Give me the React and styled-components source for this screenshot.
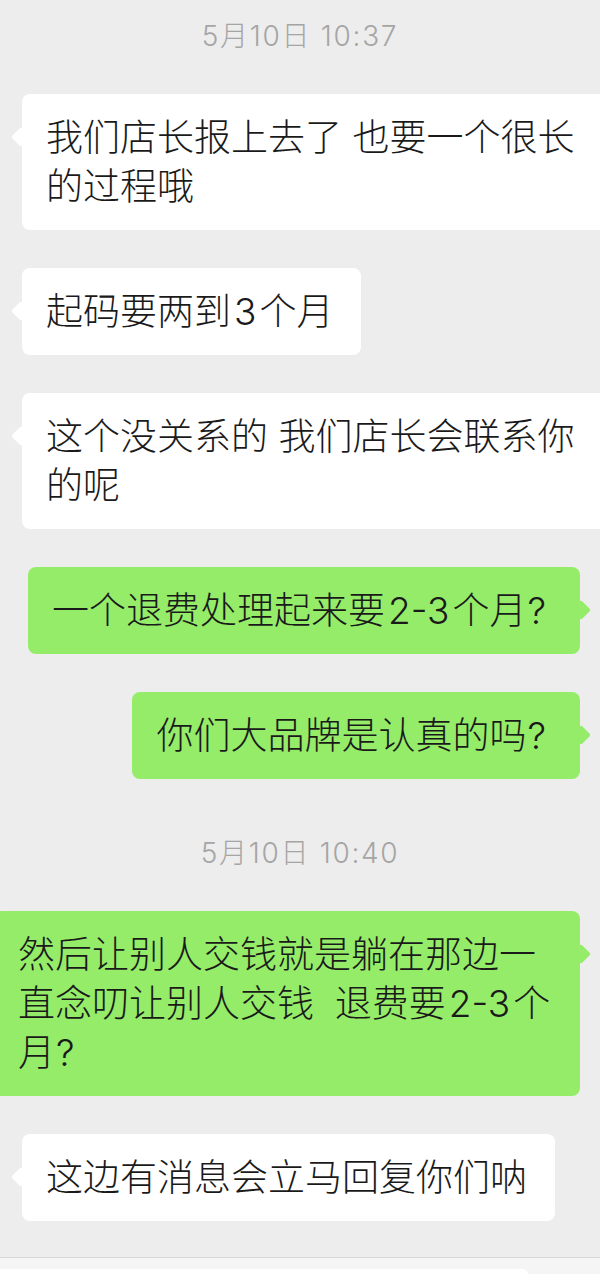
import styled, { createGlobalStyle } from "styled-components";

const GlobalStyle = createGlobalStyle`
    html, body {
        margin: 0;
        padding: 0;
        background: #ededed;
    }
    * {
        box-sizing: border-box;
    }
`

const Screen = styled.div`
    display: flex;
    flex-direction: column;
    width: 600px;
    height: 1274px;
    overflow: hidden;
    background-color: #ededed;
    font-family: "Inter", "Noto Sans CJK SC", sans-serif;
`

const ChatList = styled.div`
    display: flex;
    flex-direction: column;
    flex: 1;
`

const TimeStamp = styled.div`
    height: 36px;
    line-height: 36px;
    margin-top: ${(p) => p.$first ? "18px" : "56px"};
    text-align: center;
    font-size: 28px;
    font-weight: 300;
    color: #a5a5a5;
    letter-spacing: 1.7px;
`

const Row = styled.div`
    display: flex;
    justify-content: ${(p) => p.$mine ? "flex-end" : "flex-start"};
    margin-top: ${(p) => p.$afterTime ? "40px" : "38px"};
    padding-left: ${(p) => p.$mine ? "0" : "22px"};
    padding-right: ${(p) => p.$mine ? "20px" : "0"};
`

const Bubble = styled.div`
    position: relative;
    flex-shrink: 0;
    max-width: 586px;
    padding: 19px 28px 19px 24px;
    border-radius: 8px;
    background-color: ${(p) => p.$mine ? "#95ec69" : "#ffffff"};
    color: #1a1a1a;
    font-size: 37px;
    font-weight: 300;
    line-height: 49px;
    white-space: pre-wrap;
    word-break: break-all;

    &::before {
        content: "";
        position: absolute;
        top: 36px;
        ${(p) => p.$mine ? "right: -8px;" : "left: -8px;"}
        width: 14px;
        height: 14px;
        border-radius: 2px;
        background-color: inherit;
        transform: rotate(45deg);
    }
`

const Num = styled.span`
    margin: 0 3px;
`

const Question = styled.span`
    margin: 0 6px 0 1px;
`

const InputBar = styled.div`
    display: flex;
    height: 17px;
    margin-top: 36px;
    padding-top: 11px;
    border-top: 1px solid #d8d8d8;
    background-color: #f5f5f5;
`

const InputBox = styled.div`
    width: 536px;
    margin-left: -8px;
    height: 20px;
    border-radius: 6px;
    background-color: #ffffff;
`

const messages = [
    { type: "time", text: "5月10日 10:37", first: true },
    { type: "msg", text: "我们店长报上去了 也要一个很长的过程哦" },
    { type: "msg", text: "起码要两到3个月" },
    { type: "msg", text: "这个没关系的 我们店长会联系你的呢" },
    { type: "msg", mine: true, text: "一个退费处理起来要2-3个月?" },
    { type: "msg", mine: true, text: "你们大品牌是认真的吗?" },
    { type: "time", text: "5月10日 10:40" },
    { type: "msg", mine: true, text: "然后让别人交钱就是躺在那边一直念叨让别人交钱  退费要2-3个月?" },
    { type: "msg", text: "这边有消息会立马回复你们呐" },
]

// digits and the question mark get a little air, like the phone's autospace
const renderText = (text) =>
    text.split(/([0-9][0-9-]*|\?)/).map((part, i) => {
        if (part === "?") return <Question key={i}>?</Question>
        if (/^[0-9]/.test(part)) return <Num key={i}>{part}</Num>
        return part
    })

const App = () => {
    return (
        <>
            <GlobalStyle />
            <Screen>
                <ChatList>
                    {messages.map((m, i) =>
                        m.type === "time" ? (
                            <TimeStamp key={i} $first={m.first}>{m.text}</TimeStamp>
                        ) : (
                            <Row key={i} $mine={m.mine} $afterTime={messages[i - 1]?.type === "time"}>
                                <Bubble $mine={m.mine}>{renderText(m.text)}</Bubble>
                            </Row>
                        )
                    )}
                    <InputBar>
                        <InputBox />
                    </InputBar>
                </ChatList>
            </Screen>
        </>
    );
}

export default App;
